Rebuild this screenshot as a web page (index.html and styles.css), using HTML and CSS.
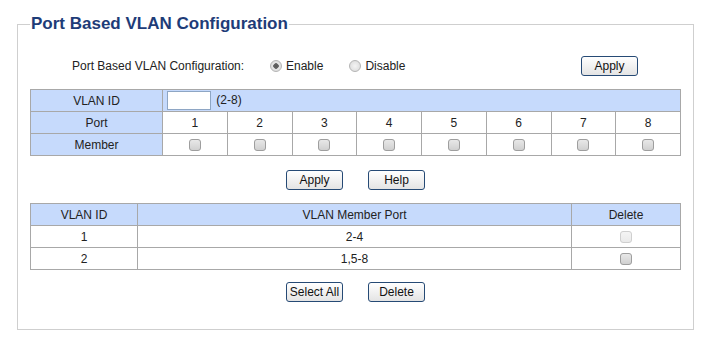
FILE: index.html
```html
<!DOCTYPE html>
<html lang="en">
<head>
    <meta charset="UTF-8">
    <title>Port Based VLAN Configuration</title>
    <link rel="stylesheet" href="styles.css">
</head>
<body>
    <fieldset class="panel">
        <legend class="panel-title">Port Based VLAN Configuration</legend>

        <!-- global enable / disable -->
        <div class="state-row">
            <span class="state-label">Port Based VLAN Configuration:</span>
            <label class="radio-item"><input type="radio" name="state" class="radio" checked> Enable</label>
            <label class="radio-item"><input type="radio" name="state" class="radio"> Disable</label>
            <button type="button" class="btn btn-top">Apply</button>
        </div>

        <table class="grid member-grid">
            <colgroup>
                <col class="col-head">
                <col><col><col><col><col><col><col><col>
            </colgroup>
            <tr class="head-row">
                <td>VLAN ID</td>
                <td colspan="8" class="id-cell"><input type="text" class="vid-input"> (2-8)</td>
            </tr>
            <tr>
                <td class="head-cell">Port</td>
                <td>1</td><td>2</td><td>3</td><td>4</td><td>5</td><td>6</td><td>7</td><td>8</td>
            </tr>
            <tr>
                <td class="head-cell">Member</td>
                <td><input type="checkbox" class="check"></td>
                <td><input type="checkbox" class="check"></td>
                <td><input type="checkbox" class="check"></td>
                <td><input type="checkbox" class="check"></td>
                <td><input type="checkbox" class="check"></td>
                <td><input type="checkbox" class="check"></td>
                <td><input type="checkbox" class="check"></td>
                <td><input type="checkbox" class="check"></td>
            </tr>
        </table>

        <div class="btn-row">
            <button type="button" class="btn">Apply</button>
            <button type="button" class="btn">Help</button>
        </div>

        <table class="grid list-grid">
            <colgroup>
                <col class="col-id">
                <col>
                <col class="col-del">
            </colgroup>
            <tr class="head-row">
                <td>VLAN ID</td>
                <td>VLAN Member Port</td>
                <td>Delete</td>
            </tr>
            <tr>
                <td>1</td>
                <td>2-4</td>
                <td><input type="checkbox" class="check" disabled></td>
            </tr>
            <tr>
                <td>2</td>
                <td>1,5-8</td>
                <td><input type="checkbox" class="check"></td>
            </tr>
        </table>

        <div class="btn-row btn-row-last">
            <button type="button" class="btn">Select All</button>
            <button type="button" class="btn">Delete</button>
        </div>
    </fieldset>
</body>
</html>
```

FILE: styles.css
```css
/* Page */
body {
    font-family: 'Liberation Sans', Arial, sans-serif;
    font-size: 12px;
    color: #222;
    background-color: #fff;
    margin: 0;
    padding: 14px 0 0 17px;
}

/* Outer frame */
.panel {
    width: 650px;
    margin: 0;
    padding: 21px 12px 27px 12px;
    border: 1px solid #cfcfcf;
    box-sizing: content-box;
}

.panel-title {
    font-size: 17px;
    font-weight: bold;
    color: #1e3c78;
    padding: 0 1px;
    margin-left: 0;
}

/* Enable / disable row */
.state-row {
    display: flex;
    align-items: center;
    height: 22px;
    margin-bottom: 12px;
}

.state-label {
    margin-left: 42px;
    width: 198px;
}

.radio-item {
    display: flex;
    align-items: center;
    gap: 4px;
    margin-right: 26px;
}

.radio {
    appearance: none;
    width: 12px;
    height: 12px;
    margin: 0;
    border: 1px solid #b4b4b4;
    border-radius: 50%;
    background: radial-gradient(circle, #f4f4f4 0, #d8d8d8 100%);
    box-sizing: border-box;
}

.radio:checked {
    background: radial-gradient(circle, #555 0, #666 2.5px, #e6e6e6 3px, #d4d4d4 100%);
}

.btn-top {
    width: 58px;
    margin-left: auto;
    margin-right: 43px;
}

/* Buttons */
.btn {
    font-family: 'Liberation Sans', Arial, sans-serif;
    font-size: 12px;
    color: #111;
    width: 57px;
    height: 20px;
    padding: 0;
    border: 1px solid #264a75;
    border-radius: 3px;
    background: linear-gradient(#ffffff, #e4e4e4);
}

.btn-row {
    display: flex;
    justify-content: center;
    gap: 25px;
    margin: 14px 0 13px;
}

.btn-row-last {
    margin: 12px 0 0;
}

/* Tables */
.grid {
    width: 651px;
    border-collapse: collapse;
    table-layout: fixed;
}

.grid td {
    height: 21px;
    padding: 0;
    border: 1px solid #a8a8a8;
    text-align: center;
    color: #222;
}

.head-row td,
.grid .head-cell {
    background-color: #c6dafc;
}

.col-head {
    width: 132px;
}

.grid .id-cell {
    text-align: left;
    padding-left: 4px;
}

.vid-input {
    width: 44px;
    height: 19px;
    margin: 0 2px 0 0;
    padding: 0;
    border: 1px solid #8ea6c4;
    box-sizing: border-box;
    vertical-align: middle;
}

.col-id {
    width: 107px;
}

.col-del {
    width: 109px;
}

.check {
    appearance: none;
    width: 12px;
    height: 12px;
    margin: 0;
    border: 1px solid #9e9e9e;
    border-radius: 3px;
    background: linear-gradient(#e8e8e8, #d0d0d0);
    box-sizing: border-box;
    vertical-align: middle;
}

.check:disabled {
    border-color: #cfcfcf;
    background: linear-gradient(#f4f4f4, #eaeaea);
}
```
